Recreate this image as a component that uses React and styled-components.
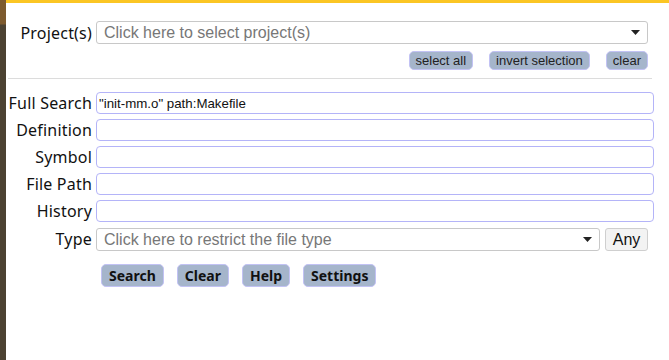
import React from "react";
import styled, { createGlobalStyle } from "styled-components";

const GlobalStyle = createGlobalStyle`
  html, body {
    margin: 0;
    padding: 0;
    background: #ffffff;
  }
  body {
    font-family: "Noto Sans", "DejaVu Sans", sans-serif;
  }
`;

function Caret() {
  return (
    <svg width="9" height="5" viewBox="0 0 9 5">
      <path d="M0 0 L9 0 L4.5 5 Z" fill="#222" />
    </svg>
  );
}

function App() {
  return (
    <>
      <GlobalStyle />
      <Page>
        <SideStrip />
        <Main>
          <TopBar />
          <ProjectRow>
            <Label>Project(s)</Label>
            <Select width={552}>
              <Placeholder>Click here to select project(s)</Placeholder>
              <Caret />
            </Select>
          </ProjectRow>
          <SmallButtons>
            <SmallButton>select all</SmallButton>
            <SmallButton>invert selection</SmallButton>
            <SmallButton>clear</SmallButton>
          </SmallButtons>
          <Rule />
          <Form>
            <Label>Full Search</Label>
            <TextInput defaultValue={'"init-mm.o" path:Makefile'} />
            <Label>Definition</Label>
            <TextInput />
            <Label>Symbol</Label>
            <TextInput />
            <Label>File Path</Label>
            <TextInput />
            <Label>History</Label>
            <TextInput />
            <Label>Type</Label>
            <TypeCell>
              <Select width={504}>
                <Placeholder>Click here to restrict the file type</Placeholder>
                <Caret />
              </Select>
              <AnyButton>Any</AnyButton>
            </TypeCell>
          </Form>
          <Actions>
            <ActionButton>Search</ActionButton>
            <ActionButton>Clear</ActionButton>
            <ActionButton>Help</ActionButton>
            <ActionButton>Settings</ActionButton>
          </Actions>
        </Main>
      </Page>
    </>
  );
}

const Page = styled.div`
  display: flex;
  width: 669px;
  height: 360px;
  overflow: hidden;
`;

const SideStrip = styled.div`
  width: 6px;
  flex-shrink: 0;
  background: linear-gradient(
    to bottom,
    #7d5a2e 0px,
    #7d5a2e 24px,
    #4c4232 25px,
    #4c4232 100%
  );
`;

const Main = styled.div`
  flex: 1;
  display: flex;
  flex-direction: column;
`;

const TopBar = styled.div`
  height: 3px;
  background: #fbc624;
`;

const Label = styled.label`
  font-size: 16px;
  color: #111;
  text-align: right;
  line-height: 22px;
  white-space: nowrap;
  letter-spacing: 0.2px;
`;

const ProjectRow = styled.div`
  display: grid;
  grid-template-columns: 86px auto;
  column-gap: 4px;
  align-items: center;
  margin-top: 18px;
`;

const Select = styled.div`
  box-sizing: border-box;
  width: ${(p) => p.width}px;
  height: 23px;
  border: 1px solid #c8c8c8;
  border-radius: 3px;
  display: flex;
  align-items: center;
  justify-content: space-between;
  padding: 0 7px 0 7px;
  background: #fff;
`;

const Placeholder = styled.span`
  font-family: "Liberation Sans", Arial, sans-serif;
  font-size: 16px;
  color: #777;
`;

const SmallButtons = styled.div`
  display: flex;
  justify-content: flex-end;
  gap: 16px;
  width: 642px;
  margin-top: 7px;
`;

const SmallButton = styled.button`
  font-family: "Liberation Sans", Arial, sans-serif;
  font-size: 13px;
  color: #222;
  background: #a5b5cb;
  border: 1px solid #c2c2f4;
  border-radius: 5px;
  height: 19px;
  padding: 0 6px;
  line-height: 17px;
`;

const Rule = styled.div`
  height: 1px;
  background: #dcdcdc;
  width: 644px;
  margin: 8px 0 0 2px;
`;

const Form = styled.div`
  display: grid;
  grid-template-columns: 86px 558px;
  column-gap: 4px;
  row-gap: 5px;
  align-items: center;
  margin-top: 13px;
`;

const TextInput = styled.input`
  box-sizing: border-box;
  width: 558px;
  height: 22px;
  border: 1px solid #b4b4f8;
  border-radius: 4px;
  padding: 0 2px;
  font-family: "Liberation Sans", Arial, sans-serif;
  font-size: 13.3px;
  color: #111;
  outline: none;
`;

const TypeCell = styled.div`
  display: flex;
  align-items: center;
  gap: 5px;
  margin-top: 1px;
`;

const AnyButton = styled.button`
  box-sizing: border-box;
  height: 23px;
  width: 43px;
  font-family: "Liberation Sans", Arial, sans-serif;
  font-size: 16px;
  color: #111;
  background: #f3f3f3;
  border: 1px solid #cfcfcf;
  border-radius: 3px;
  padding: 0;
`;

const Actions = styled.div`
  display: flex;
  gap: 13px;
  margin: 13px 0 0 95px;
`;

const ActionButton = styled.button`
  font-family: "Noto Sans", "DejaVu Sans", sans-serif;
  font-size: 14px;
  font-weight: 700;
  color: #111;
  background: #a5b5cb;
  border: 1px solid #c2c2f4;
  border-radius: 5px;
  height: 23px;
  padding: 0 7px;
  line-height: 20px;
`;

export default App;
